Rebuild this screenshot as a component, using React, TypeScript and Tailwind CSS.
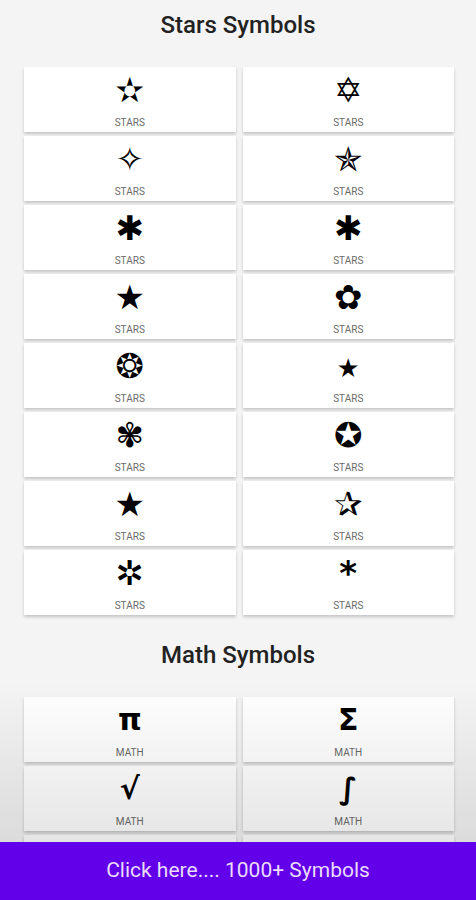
import React from "react";

const stars = ["✫", "✡", "✧", "✯", "✱", "✱", "★", "✿", "❂", "⭑", "✾", "✪", "★", "✰", "✲", "*"];
const math = ["π", "Σ", "√", "∫", "∞", "∂", "≠", "±"];

function SymbolCard({ symbol, label, big }: { symbol: string; label: string; big?: boolean }) {
	return (
		<div className="h-[65px] bg-white shadow-[0_2px_3px_rgba(0,0,0,0.2)] flex flex-col items-center pt-[6px]">
			<div
				className={`h-[34px] leading-[34px] font-bold text-black ${big ? "text-[34px]" : "text-[30px]"}`}
				style={{ fontFamily: "'DejaVu Sans', 'Noto Sans', sans-serif" }}
			>
				{symbol}
			</div>
			<div className="mt-[10px] text-[10px] leading-[12px] text-[#6b6b6b] uppercase">{label}</div>
		</div>
	);
}

function Section({ title, items, label, big }: { title: string; items: string[]; label: string; big?: boolean }) {
	return (
		<section>
			<h2 className="text-center text-[24px] leading-[50px] font-medium text-[#222]">{title}</h2>
			<div className="mt-[17px] grid grid-cols-2 gap-x-[7px] gap-y-[4px] pl-[24px] pr-[22px]">
				{items.map((s, i) => (
					<SymbolCard key={i} symbol={s} label={label} big={big} />
				))}
			</div>
		</section>
	);
}

export default function App() {
	return (
		<div className="min-h-screen bg-[#f4f4f4] pb-[80px]" style={{ fontFamily: "Roboto, 'Liberation Sans', sans-serif" }}>
			<Section title="Stars Symbols" items={stars} label="Stars" big />
			<div className="mt-[15px]">
				<Section title="Math Symbols" items={math} label="Math" />
			</div>

			{/* fade above the bottom bar */}
			<div className="fixed left-0 right-0 bottom-[58px] h-[160px] pointer-events-none bg-linear-to-b from-transparent to-black/10" />
			<div className="fixed left-0 right-0 bottom-0 h-[58px] bg-[#6200ea] flex items-center justify-center">
				<span className="text-[21px] text-[#eadcff]">Click here.... 1000+ Symbols</span>
			</div>
		</div>
	);
}
